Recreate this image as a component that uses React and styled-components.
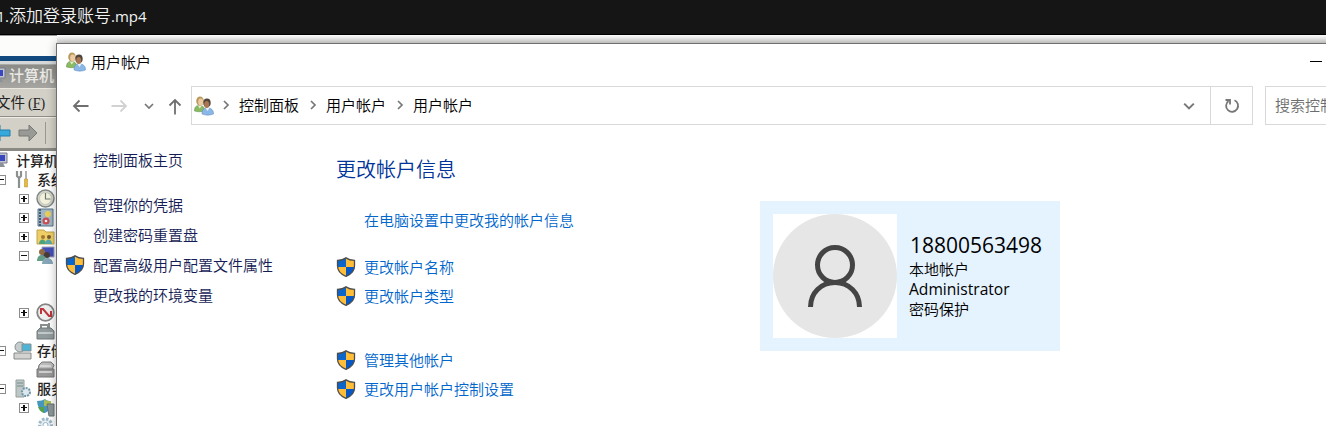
import React from "react";
import styled, { createGlobalStyle } from "styled-components";

const Global = createGlobalStyle`
  * { box-sizing: border-box; }
  body {
    margin: 0;
    overflow: hidden;
    background: #fbfbfa;
    font-family: "Open Sans", "Noto Sans CJK SC", sans-serif;
  }
  svg { flex: none; }
`;

const Screen = styled.div`
  position: relative;
  width: 1326px;
  height: 426px;
  overflow: hidden;
  background: #fbfbfa;
`;

const PlayerBar = styled.header`
  height: 35px;
  background: #151515;
  border-bottom: 1px solid #000;
  color: #f2f2f2;
  font-size: 17px;
  line-height: 31px;
  white-space: nowrap;
`;

const FileName = styled.span`
  display: inline-block;
  margin-left: -3.5px;
  font-weight: 350;
`;

const Latin = styled.span`
  font-size: 15px;
  font-weight: 400;
`;

const Desktop = styled.div`
  width: 1326px;
  height: 8px;
  background: linear-gradient(#fff, #dcdcdb);
`;

const Remote = styled.section`
  width: 57px;
  height: 391px;
  margin-top: -8px;
  overflow: hidden;
  background: #fff;
  white-space: nowrap;
  color: #222;
  font-family: "Noto Sans CJK SC", sans-serif;
  font-size: 14px;
`;

const RemoteEdge = styled.div`
  height: 30px;
  border-top: 1px solid #999;
  background: linear-gradient(#fcfcfb 0 20px, #124a80 20px 25px, #d5d8d8 25px 28px, #aaa9a6 28px);
`;

const RemoteTitle = styled.div`
  height: 23px;
  display: flex;
  align-items: center;
  gap: 2px;
  padding-bottom: 1px;
  margin-left: -11px;
  background: linear-gradient(#8b8b88, #a6a5a1);
  color: #e9e8e4;
  font-size: 15px;
  font-weight: 500;
  span { margin-top: -3px; }
`;

const RemoteMenu = styled.div`
  height: 29px;
  border-top: 1px solid #e8e6df;
  border-bottom: 1px solid #8e8c84;
  background: #d3d0c7;
  line-height: 26px;
  font-size: 14.5px;
  span { margin-left: -4px; }
  i { margin-left: 3px; font: 400 14px "Liberation Serif", serif; }
  u { text-underline-offset: 1px; }
`;

const RemoteTools = styled.div`
  height: 34px;
  display: flex;
  align-items: center;
  gap: 7px;
  margin-left: -9px;
  border-top: 1px solid #efede7;
  border-bottom: 3px solid #8a8983;
  background: #d3d0c7;
`;

const ToolDivider = styled.span`
  width: 1px;
  height: 22px;
  background: #98968e;
`;

const TreeRow = styled.div`
  height: 19px;
  display: flex;
  align-items: center;
  padding-left: ${(p) => [0, 0, 19, 36][p.$level]}px;
  margin-left: ${(p) => [-9, -4, 0, 0][p.$level]}px;
  gap: ${(p) => [7, 7, 7, 0][p.$level]}px;
  line-height: 18px;
  font-weight: 500;
`;

const TreeLabel = styled.span`
  margin: -1px 0 0 ${(p) => (p.$level === 1 ? -2 : 0)}px;
`;

const Expander = styled.span`
  position: relative;
  flex: none;
  width: 10px;
  height: 10px;
  border: 1px solid #8c8c8c;
  background: #fff;
  &::before {
    content: "";
    position: absolute;
    left: 1px;
    top: 3px;
    width: 6px;
    height: 1.5px;
    background: #111;
  }
  &::after {
    content: "";
    display: ${(p) => (p.$open ? "none" : "block")};
    position: absolute;
    left: 3px;
    top: 1px;
    width: 1.5px;
    height: 6px;
    background: #111;
  }
`;

const Window = styled.main`
  position: absolute;
  left: 56px;
  top: 43px;
  width: 1290px;
  height: 400px;
  border: 1px solid #707070;
  background: #fff;
  box-shadow: 0 0 9px rgba(0, 0, 0, 0.3);
  color: #000;
  font-size: 15px;
  font-weight: 350;
  white-space: nowrap;
`;

const TitleBar = styled.div`
  height: 36px;
  display: flex;
  align-items: center;
  padding-left: 9px;
  gap: 5px;
  span { margin-top: -2px; }
`;

const Minimise = styled.i`
  width: 12px;
  height: 1px;
  margin: -1px 23px 0 auto;
  background: #000;
`;

const NavRow = styled.div`
  height: 39px;
  margin-top: 6px;
  display: flex;
`;

const NavButtons = styled.div`
  flex: none;
  width: 134px;
  display: flex;
  align-items: center;
  padding-left: 15px;
  svg:nth-child(2) { margin-left: 20px; }
  svg:nth-child(3) { margin-left: 16px; }
  svg:nth-child(4) { margin: 3px 0 0 12px; }
`;

const AddressBar = styled.div`
  flex: none;
  width: 1062px;
  display: flex;
  align-items: center;
  border: 1px solid #d9d9d9;
  padding-left: 2px;
`;

const Crumb = styled.span`
  margin: -2px 0 0 ${(p) => (p.$first ? 7 : 9)}px;
  display: flex;
  align-items: center;
  gap: 8px;
`;

const DropButton = styled.span`
  margin-left: auto;
  width: 42px;
  display: flex;
  justify-content: center;
`;

const Refresh = styled.span`
  width: 42px;
  height: 37px;
  display: flex;
  align-items: center;
  justify-content: center;
  border-left: 1px solid #d9d9d9;
`;

const SearchBox = styled.div`
  flex: none;
  width: 200px;
  margin-left: 12px;
  border: 1px solid #d9d9d9;
  padding-left: 9px;
  line-height: 36px;
  color: #6d6d6d;
`;

const Body = styled.div`
  display: flex;
`;

const Sidebar = styled.nav`
  width: 279px;
  padding-top: 20px;
  color: #151c55;
`;

const SideLink = styled.div`
  height: 30px;
  margin-bottom: ${(p) => p.$after || 0}px;
  display: flex;
  align-items: center;
  padding-left: 8px;
`;

const LinkText = styled.span`
  margin-top: -2px;
`;

const ShieldSlot = styled.span`
  width: 28px;
  height: 20px;
  flex: none;
  display: flex;
`;

const Tasks = styled.section`
  width: 424px;
  padding-top: 27px;
`;

const Heading = styled.h1`
  margin: 0 0 17px;
  height: 36px;
  line-height: 36px;
  font-size: 20px;
  font-weight: 350;
  color: #003399;
`;

const TaskLink = styled.div`
  height: 29px;
  margin-bottom: ${(p) => p.$after || 0}px;
  display: flex;
  align-items: center;
  color: #0066cc;
  ${LinkText} { margin-top: -1px; }
`;

const AccountCard = styled.section`
  width: 300px;
  height: 150px;
  margin-top: 76px;
  padding-left: 13px;
  display: flex;
  align-items: center;
  background: #e5f3ff;
`;

const Avatar = styled.div`
  width: 124px;
  height: 124px;
  background: #fff;
`;

const AccountInfo = styled.div`
  margin: -5px 0 0 12px;
  line-height: 20px;
`;

const AccountName = styled.div`
  height: 28px;
  margin-top: 2px;
  padding-left: 1px;
  line-height: 29px;
  font-size: 21px;
  font-weight: 400;
`;

const AccountRole = styled.div`
  font-size: 15.6px;
  font-weight: 400;
`;

const Shield = () => (
  <svg width="20" height="20" viewBox="0 0 20 20">
    <path d="M10 .7C8 2.3 5 3.2 1.5 3.2V10H10Z" fill="#0b65cb" />
    <path d="M10 .7c2 1.6 5 2.5 8.5 2.5V10H10Z" fill="#ffbd38" />
    <path d="M1.500 10H10v9.500C5.500 17.500 2 14.500 1.500 10Z" fill="#ffbd38" />
    <path d="M10 10h8.500c-.5 4.500-4 7.500-8.500 9.500Z" fill="#0758c4" />
    <path d="M10 .9C7.500 2.700 5 3.300 1.500 3.300V9c0 5 4 8.500 8.500 10.300C14.500 17.500 18.500 14 18.500 9V3.300C15 3.300 12.500 2.700 10 .9Z" fill="none" stroke="#4c4d4d" strokeWidth="1.300" />
  </svg>
);

const People = () => (
  <svg width="20" height="20" viewBox="0 0 20 20">
    <path d="M.5 15c0-4 1.500-5.500 5-5.500s5 1.500 5 5.500c-3 1-7 1-10 0Z" fill="#8abb62" stroke="#548a38" strokeWidth=".5" />
    <path d="m4 9.500 1.700 3L8 9.500Z" fill="#e9eddb" />
    <ellipse cx="6" cy="5" rx="3.800" ry="4.500" fill="#b99a5c" />
    <ellipse cx="6.700" cy="6" rx="2.500" ry="3.400" fill="#edcba2" />
    <path d="M8 18c0-4.500 1.800-6 5.500-6s6 1.800 6 6c-3.500 1.500-8 1.500-11.500 0Z" fill="#8bb7e7" stroke="#5584bd" strokeWidth=".5" />
    <path d="m11.500 12 2 3 2-3Z" fill="#e9f2fa" />
    <ellipse cx="13" cy="6.700" rx="3.700" ry="4.300" fill="#51453b" />
    <ellipse cx="12.700" cy="8.500" rx="2.500" ry="3.500" fill="#aa7752" />
  </svg>
);

const Arrow = ({ color, turn = 0 }) => (
  <svg width="18" height="18" viewBox="0 0 18 18" fill="none" stroke={color} strokeWidth="1.800">
    <path d="M16.500 9H2M7.500 3.500 2 9l5.500 5.500" transform={`rotate(${turn} 9 9)`} />
  </svg>
);

const Chevron = ({ down, size = 10 }) => (
  <svg width={size} height={size} viewBox="0 0 10 10" fill="none" stroke="#777" strokeWidth="1.700">
    <path d={down ? "M1 3l4 4 4-4" : "M3 1l4 4-4 4"} />
  </svg>
);

const Computer = () => (
  <svg width="18" height="18" viewBox="0 0 18 18">
    <path d="M2 1h14v10H2Z" fill="#c1c3ce" stroke="#777b91" />
    <path d="M4 3h10v6H4Z" fill="#3949bd" />
    <path d="M7 11h5l2 4H5Z" fill="#8b9197" />
  </svg>
);

const ToolArrow = ({ back }) => (
  <svg width="20" height="20" viewBox="0 0 20 20">
    <path d={back ? "M1 10l8-8v5h10v6H9v5Z" : "M19 10l-8-8v5H1v6h10v5Z"} fill={back ? "#35a9db" : "#999a96"} stroke={back ? "#237da7" : "#777974"} />
  </svg>
);

const glyphs = {
  tools: (
    <>
      <path d="M4 1v5l2 2 2-2V1M6 8v10" fill="none" stroke="#8b918f" strokeWidth="2.200" />
      <path d="M13 1v8" stroke="#999" strokeWidth="1.500" />
      <path d="M11.500 9h3v8h-3Z" fill="#e8bd35" stroke="#aa8b32" strokeWidth=".5" />
    </>
  ),
  clock: (
    <>
      <circle cx="9.500" cy="9.500" r="8.500" fill="#d3d5cd" stroke="#818786" strokeWidth="1.500" />
      <circle cx="9.500" cy="9.500" r="6" fill="#f3f1dc" stroke="#c3c9b8" />
      <path d="M9.500 4v6h5" fill="none" stroke="#6c7775" strokeWidth="1.200" />
    </>
  ),
  log: (
    <>
      <path d="M2 1h15v17H2Z" fill="#a3b7c2" stroke="#55728a" />
      <path d="M4 1v17" stroke="#405c78" strokeWidth="2" strokeDasharray="2 1" />
      <circle cx="12" cy="6" r="3" fill="#eace57" />
      <circle cx="10" cy="13" r="3.500" fill="#c64d58" />
      <circle cx="10" cy="13" r="1.300" fill="#eee" />
    </>
  ),
  folder: (
    <>
      <path d="M1 3h7l2 2h8v12H1Z" fill="#efcf65" stroke="#bea451" />
      <circle cx="7" cy="10" r="2" fill="#a57832" />
      <circle cx="13" cy="10" r="2" fill="#795931" />
      <path d="M3 17c0-6 7-6 7 0Z" fill="#4da279" />
      <path d="M9 17c0-6 7-6 7 0Z" fill="#56a9aa" />
    </>
  ),
  users: (
    <>
      <path d="M6 1h12v10H6Z" fill="#4450b7" stroke="#a2a8bf" />
      <circle cx="6" cy="6" r="3" fill="#926a42" />
      <circle cx="11" cy="9" r="3" fill="#493c36" />
      <path d="M1 15c0-8 9-8 9 0Z" fill="#649e88" />
      <path d="M6 18c0-8 11-8 11 0Z" fill="#86a6b8" />
    </>
  ),
  perf: (
    <>
      <circle cx="9.500" cy="9.500" r="8.300" fill="#eee" stroke="#858585" strokeWidth="1.800" />
      <path d="M5 11V6h2l6 7h2V8" fill="none" stroke="#bd343b" strokeWidth="2" />
    </>
  ),
  device: (
    <>
      <path d="M5 7V3h7v4M13 1v6" fill="none" stroke="#87908d" strokeWidth="2" />
      <path d="M1 9l3-3h11l3 3v8H1Z" fill="#929b9b" stroke="#707879" />
      <path d="M2 11h15" stroke="#d3d9d7" strokeWidth="1.500" />
    </>
  ),
  storage: (
    <>
      <circle cx="7" cy="6" r="5" fill="#c5cdcf" stroke="#87908f" />
      <path d="M9 3h9v7H9Z" fill="#4eb4d5" stroke="#858f91" />
      <path d="M1 12h17v6H1Z" fill="#d2d3d0" stroke="#858b88" />
    </>
  ),
  disk: (
    <>
      <path d="M3 5l3-3h9l3 3-2 5H2Z" fill="#bbb" stroke="#777" />
      <path d="M1 9h17v8H1Z" fill="#979797" stroke="#777" />
      <path d="M4 6h11M3 12h13" stroke="#e1e1e1" strokeWidth="1.500" />
    </>
  ),
  services: (
    <>
      <path d="M3 1h8v17H3Z" fill="#bdc7c6" stroke="#95a09e" />
      <path d="M4 4h6M4 7h6" stroke="#748b89" />
      <circle cx="13" cy="13" r="4" fill="#dce8ed" stroke="#7196a9" strokeWidth="2" strokeDasharray="2 1" />
    </>
  ),
  router: (
    <>
      <path d="M1 3c4 0 6-1 8-2 2 2 4 2 6 2v6c-3 6-7 6-7 6S2 13 1 3Z" fill="#4696bd" />
      <path d="M8 1c2 2 4 2 7 2v5H8Z" fill="#a9bf55" />
      <path d="M11 6h7v12h-5Z" fill="#8b9798" stroke="#697274" />
      <path d="M8 9v6c-3-1-5-3-6-6Z" fill="#54a04d" />
    </>
  ),
  gear: (
    <>
      <circle cx="9.500" cy="8" r="6" fill="#e5edf0" stroke="#9bb9c9" strokeWidth="3" strokeDasharray="2.500 1.500" />
      <circle cx="9.500" cy="8" r="2.500" fill="#fff" stroke="#9bb9c9" />
    </>
  ),
};

const Glyph = ({ name }) => (
  <svg width="19" height="19" viewBox="0 0 19 19">{glyphs[name]}</svg>
);

const tree = [
  { level: 1, icon: "tools", label: "系统", open: true },
  { level: 2, icon: "clock" },
  { level: 2, icon: "log" },
  { level: 2, icon: "folder" },
  { level: 2, icon: "users", open: true },
  { level: 3 },
  { level: 3 },
  { level: 2, icon: "perf" },
  { level: 3, icon: "device" },
  { level: 1, icon: "storage", label: "存储", open: true },
  { level: 3, icon: "disk" },
  { level: 1, icon: "services", label: "服务", open: true },
  { level: 2, icon: "router" },
  { level: 3, icon: "gear" },
];

const sideLinks = [
  { label: "控制面板主页", after: 15 },
  { label: "管理你的凭据" },
  { label: "创建密码重置盘" },
  { label: "配置高级用户配置文件属性", shield: true },
  { label: "更改我的环境变量" },
];

const taskLinks = [
  { label: "在电脑设置中更改我的帐户信息", after: 18 },
  { label: "更改帐户名称", shield: true },
  { label: "更改帐户类型", shield: true, after: 35 },
  { label: "管理其他帐户", shield: true },
  { label: "更改用户帐户控制设置", shield: true },
];

export default function App() {
  return (
    <Screen>
      <Global />
      <PlayerBar>
        <FileName><Latin>1.</Latin>添加登录账号<Latin>.mp4</Latin></FileName>
      </PlayerBar>
      <Desktop />
      <Remote>
        <RemoteEdge />
        <RemoteTitle><Computer /><span>计算机</span></RemoteTitle>
        <RemoteMenu><span>文件<i>(<u>F</u>)</i></span></RemoteMenu>
        <RemoteTools><ToolArrow back /><ToolArrow /><ToolDivider /></RemoteTools>
        <TreeRow $level={0}><Computer /><TreeLabel>计算机</TreeLabel></TreeRow>
        {tree.map((row, i) => (
          <TreeRow key={i} $level={row.level}>
            {row.level < 3 && <Expander $open={row.open} />}
            {row.icon && <Glyph name={row.icon} />}
            {row.label && <TreeLabel $level={row.level}>{row.label}</TreeLabel>}
          </TreeRow>
        ))}
      </Remote>
      <Window>
        <TitleBar><People /><span>用户帐户</span><Minimise /></TitleBar>
        <NavRow>
          <NavButtons>
            <Arrow color="#6f6f6f" />
            <Arrow color="#d2d2d2" turn={180} />
            <Chevron down />
            <Arrow color="#6f6f6f" turn={90} />
          </NavButtons>
          <AddressBar>
            <People />
            {["控制面板", "用户帐户", "用户帐户"].map((name, i) => (
              <Crumb key={i} $first={i === 0}><Chevron />{name}</Crumb>
            ))}
            <DropButton><Chevron down size={12} /></DropButton>
            <Refresh>
              <svg width="16" height="16" viewBox="0 0 16 16" fill="none" stroke="#777" strokeWidth="1.800">
                <path d="M10.500 2.300A6 6 0 1 1 4.500 3M1.500 2H6v4.500" />
              </svg>
            </Refresh>
          </AddressBar>
          <SearchBox>搜索控制</SearchBox>
        </NavRow>
        <Body>
          <Sidebar>
            {sideLinks.map((link) => (
              <SideLink key={link.label} $after={link.after}>
                <ShieldSlot>{link.shield && <Shield />}</ShieldSlot>
                <LinkText>{link.label}</LinkText>
              </SideLink>
            ))}
          </Sidebar>
          <Tasks>
            <Heading>更改帐户信息</Heading>
            {taskLinks.map((link) => (
              <TaskLink key={link.label} $after={link.after}>
                <ShieldSlot>{link.shield && <Shield />}</ShieldSlot>
                <LinkText>{link.label}</LinkText>
              </TaskLink>
            ))}
          </Tasks>
          <AccountCard>
            <Avatar>
              <svg width="124" height="124" viewBox="0 0 124 124">
                <circle cx="62" cy="62" r="62" fill="#e6e6e6" />
                <g fill="none" stroke="#444" strokeWidth="5">
                  <circle cx="62" cy="51" r="17.500" />
                  <path d="M37.500 93c0-14 10.500-24.500 24.500-24.500S86.500 79 86.500 93" />
                </g>
              </svg>
            </Avatar>
            <AccountInfo>
              <AccountName>18800563498</AccountName>
              <div>本地帐户</div>
              <AccountRole>Administrator</AccountRole>
              <div>密码保护</div>
            </AccountInfo>
          </AccountCard>
        </Body>
      </Window>
    </Screen>
  );
}
